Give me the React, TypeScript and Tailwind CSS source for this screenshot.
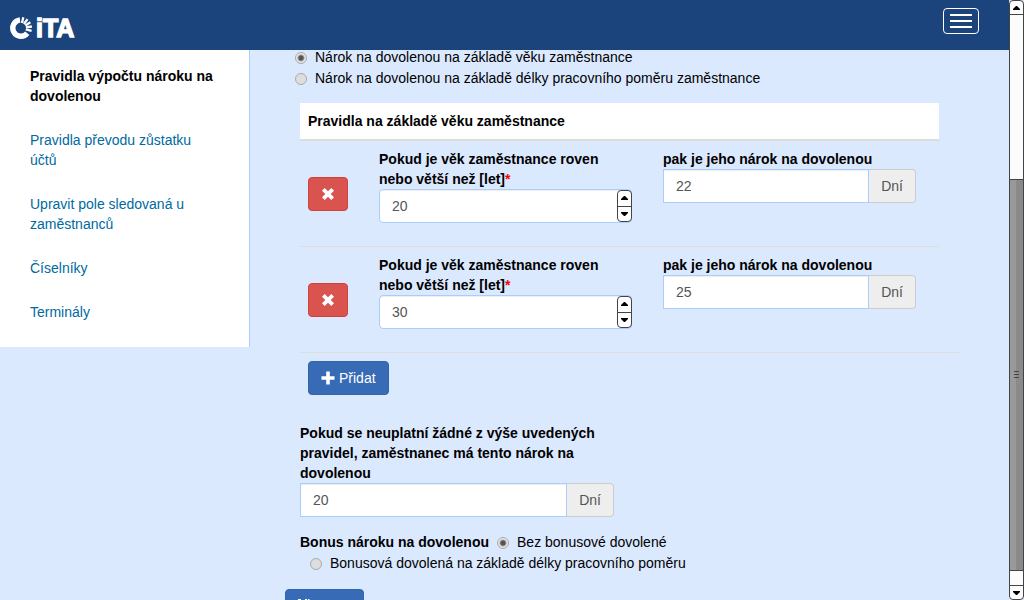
import { useState } from 'react';
import type { ReactNode } from 'react';

type Rule = { id: number; age: string; days: string };

const menuItems = [
    'Pravidla převodu zůstatku účtů',
    'Upravit pole sledovaná u zaměstnanců',
    'Číselníky',
    'Terminály',
];

const Logo = () => (
    <svg className="w-[72px] h-6" viewBox="0 0 72 24" role="img" aria-label="iTA">
        <path d="M10 3.9A8.2 8.2 0 1 0 17.3 17.3" fill="none" stroke="#fff" strokeWidth="5.4" />
        <g stroke="#fff" strokeWidth="2.3">
            <path d="M12 7.1L13.3 1.2" />
            <path d="M13.9 8L17.5 3.1" />
            <path d="M15.3 9.4L20.4 6.3" />
            <path d="M15.9 11.3L21.9 10.5" />
            <path d="M15.8 13.3L21.6 14.8" />
        </g>
        <text x="26" y="21" fill="#fff" stroke="#fff" strokeWidth="1.4" fontSize="25" fontWeight="bold" fontFamily="'Liberation Sans', Arial, sans-serif">iTA</text>
    </svg>
);

const RemoveIcon = () => (
    <svg className="w-[14px] h-[14px]" viewBox="0 0 14 14" fill="currentColor" aria-hidden="true">
        <path d="M3.7 1L7 4.3 10.3 1 13 3.7 9.7 7 13 10.3 10.3 13 7 9.7 3.7 13 1 10.3 4.3 7 1 3.7z" />
    </svg>
);

const PlusIcon = () => (
    <svg className="w-[14px] h-[14px]" viewBox="0 0 14 14" fill="currentColor" aria-hidden="true">
        <path d="M5.2 0.5h3.6v4.7h4.7v3.6H8.8v4.7H5.2V8.8H0.5V5.2h4.7z" />
    </svg>
);

const SaveIcon = () => (
    <svg className="w-[14px] h-[14px]" viewBox="0 0 14 14" fill="currentColor" aria-hidden="true">
        <path d="M0 0h3v5h7V0h1l3 3v11h-2V8H2v6H0zM7 0h2v4H7z" />
    </svg>
);

const Arrow = ({ up }: { up?: boolean }) => (
    <svg className="w-[7px] h-1" viewBox="0 0 7 4" fill="#000" aria-hidden="true">
        <path d={up ? 'M3 0h1l3 3v1H0V3z' : 'M0 0h7v1L4 4H3L0 1z'} />
    </svg>
);

const Radio = ({ name, checked, onChange, children }: { name: string; checked: boolean; onChange: () => void; children: ReactNode }) => (
    <label className="inline-flex items-center gap-2 leading-[21px]">
        <input
            type="radio"
            name={name}
            checked={checked}
            onChange={onChange}
            className="appearance-none shrink-0 w-3 h-3 rounded-full border border-[#aaa] bg-[#dedede] checked:bg-[radial-gradient(circle,#555_0_2px,#e8e8e8_4px)]"
        />
        {children}
    </label>
);

const DaysInput = ({ id, value, onChange }: { id: string; value: string; onChange: (value: string) => void }) => (
    <div className="flex h-[34px]">
        <input
            id={id}
            type="text"
            value={value}
            onChange={(e) => onChange(e.target.value)}
            className="min-w-0 flex-1 bg-white border border-[#aaccff] px-3 text-[#555] shadow-[inset_0_1px_1px_rgba(0,0,0,0.075)]"
        />
        <span className="flex items-center border border-l-0 border-[#ccc] bg-[#eee] rounded-r px-3 text-[#555]">Dní</span>
    </div>
);

const RuleRow = ({ rule, onChange, onRemove }: { rule: Rule; onChange: (rule: Rule) => void; onRemove: () => void }) => {
    const step = (diff: number) => onChange({ ...rule, age: String(Number(rule.age) + diff) });

    return (
        <tr className="border-b border-[#ddd] last:border-b-0">
            <td className="p-2 align-middle">
                <button type="button" onClick={onRemove} aria-label="Odebrat" className="flex items-center justify-center w-10 h-[34px] rounded border border-[#d43f3a] bg-[#d9534f] text-white">
                    <RemoveIcon />
                </button>
            </td>
            <td className="p-2 pr-[23px] pb-[23px] align-top">
                <label htmlFor={`age-${rule.id}`} className="block font-bold">
                    Pokud je věk zaměstnance roven nebo větší než [let]<span className="text-[#f00]">*</span>
                </label>
                <div className="flex h-[34px] rounded border border-[#aaccff] bg-white shadow-[inset_0_1px_1px_rgba(0,0,0,0.075)]">
                    <input
                        id={`age-${rule.id}`}
                        type="text"
                        inputMode="numeric"
                        value={rule.age}
                        onChange={(e) => onChange({ ...rule, age: e.target.value })}
                        className="min-w-0 flex-1 px-3 text-[#555]"
                    />
                    <div className="flex flex-col w-[15px] -mr-px rounded border border-[#444] divide-y divide-[#444]">
                        <button type="button" onClick={() => step(1)} aria-label="Zvýšit" className="flex flex-1 items-center justify-center"><Arrow up /></button>
                        <button type="button" onClick={() => step(-1)} aria-label="Snížit" className="flex flex-1 items-center justify-center"><Arrow /></button>
                    </div>
                </div>
            </td>
            <td className="p-2 pr-[23px] pb-[23px] align-top">
                <label htmlFor={`days-${rule.id}`} className="block font-bold">pak je jeho nárok na dovolenou</label>
                <DaysInput id={`days-${rule.id}`} value={rule.days} onChange={(days) => onChange({ ...rule, days })} />
            </td>
        </tr>
    );
};

const ScrollBar = () => (
    <div className="flex flex-col shrink-0 w-[15px] h-full rounded border border-[#444] bg-[#fcfcfc]">
        <button type="button" aria-label="Nahoru" className="flex items-center justify-center h-[14px] border-b border-[#444]"><Arrow up /></button>
        <div className="grow-[164] basis-0" />
        <div className="grow-[391] basis-0 flex flex-col items-center justify-center gap-[2px] border-y border-[#444] bg-linear-to-r from-[#999] from-50% to-[#8a8a8a] to-50%">
            <span className="w-[5px] h-px bg-[#444]" />
            <span className="w-[5px] h-px bg-[#444]" />
            <span className="w-[5px] h-px bg-[#444]" />
        </div>
        <div className="grow-[14] basis-0" />
        <button type="button" aria-label="Dolů" className="flex items-center justify-center h-[14px] border-t border-[#444]"><Arrow /></button>
    </div>
);

export default function App() {
    const [basis, setBasis] = useState('age');
    const [bonus, setBonus] = useState('none');
    const [fallback, setFallback] = useState('20');
    const [rules, setRules] = useState<Rule[]>([
        { id: 1, age: '20', days: '22' },
        { id: 2, age: '30', days: '25' },
    ]);

    const updateRule = (rule: Rule) => setRules(rules.map((r) => (r.id === rule.id ? rule : r)));
    const removeRule = (id: number) => setRules(rules.filter((r) => r.id !== id));
    const addRule = () => setRules([...rules, { id: Date.now(), age: '', days: '' }]);

    return (
        <div className="flex h-screen overflow-hidden bg-[#dbe9ff] text-black text-sm leading-5 font-['Liberation_Sans',Arial,sans-serif]">
            <div className="flex flex-col flex-1 min-w-0">
                <header className="relative z-10 flex shrink-0 items-center justify-between h-[50px] pl-[10px] pr-[30px] bg-[#1b437c]">
                    <a href="#" className="pt-[6px]"><Logo /></a>
                    <button type="button" aria-label="Menu" className="flex flex-col items-center justify-center gap-1 w-9 h-[26px] mb-2 rounded border border-white">
                        <span className="w-[22px] h-[2px] bg-white" />
                        <span className="w-[22px] h-[2px] bg-white" />
                        <span className="w-[22px] h-[2px] bg-white" />
                    </button>
                </header>

                <div className="flex flex-1 min-h-0 items-start">
                    <nav className="flex flex-col shrink-0 gap-6 w-[250px] pl-[30px] pr-7 pt-4 pb-[25px] bg-white border-r border-[#aaccff]">
                        <a href="#" className="font-bold text-black">Pravidla výpočtu nároku na dovolenou</a>
                        {menuItems.map((item) => (
                            <a href="#" key={item} className="text-[#006a9f]">{item}</a>
                        ))}
                    </nav>

                    <main className="flex-1 min-w-0 -mt-[3px] pl-[50px] pr-[50px]">
                        <div className="flex flex-col items-start -ml-[5px]">
                            <Radio name="basis" checked={basis === 'age'} onChange={() => setBasis('age')}>Nárok na dovolenou na základě věku zaměstnance</Radio>
                            <Radio name="basis" checked={basis === 'length'} onChange={() => setBasis('length')}>Nárok na dovolenou na základě délky pracovního poměru zaměstnance</Radio>
                        </div>

                        <div className="mt-[14px] pr-5">
                            <table className="w-full table-fixed border-collapse">
                                <colgroup>
                                    <col className="w-[71px]" />
                                    <col />
                                    <col />
                                </colgroup>
                                <thead>
                                    <tr className="bg-white border-b-2 border-[#ddd]">
                                        <th colSpan={3} className="p-2 text-left font-bold">Pravidla na základě věku zaměstnance</th>
                                    </tr>
                                </thead>
                                <tbody>
                                    {rules.map((rule) => (
                                        <RuleRow key={rule.id} rule={rule} onChange={updateRule} onRemove={() => removeRule(rule.id)} />
                                    ))}
                                </tbody>
                            </table>
                        </div>

                        <div className="border-t border-[#ddd] p-2">
                            <button type="button" onClick={addRule} className="flex items-center gap-1 h-[34px] px-3 rounded border border-[#3264aa] bg-[#376bb5] text-white">
                                <PlusIcon />
                                Přidat
                            </button>
                        </div>

                        <div className="mt-5 w-[314px] max-w-full">
                            <label htmlFor="fallback" className="block font-bold">Pokud se neuplatní žádné z výše uvedených pravidel, zaměstnanec má tento nárok na dovolenou</label>
                            <DaysInput id="fallback" value={fallback} onChange={setFallback} />
                        </div>

                        <div role="radiogroup" aria-labelledby="bonus" className="mt-[15px]">
                            <div className="flex items-start gap-2">
                                <span id="bonus" className="font-bold">Bonus nároku na dovolenou</span>
                                <Radio name="bonus" checked={bonus === 'none'} onChange={() => setBonus('none')}>Bez bonusové dovolené</Radio>
                            </div>
                            <div className="pl-[10px]">
                                <Radio name="bonus" checked={bonus === 'length'} onChange={() => setBonus('length')}>Bonusová dovolená na základě délky pracovního poměru</Radio>
                            </div>
                        </div>

                        <button type="button" className="flex items-center gap-1 h-[34px] mt-[14px] -ml-[15px] px-3 rounded border border-[#3264aa] bg-[#376bb5] text-white">
                            <SaveIcon />
                            Uložit
                        </button>
                    </main>
                </div>
            </div>
            <ScrollBar />
        </div>
    );
}
